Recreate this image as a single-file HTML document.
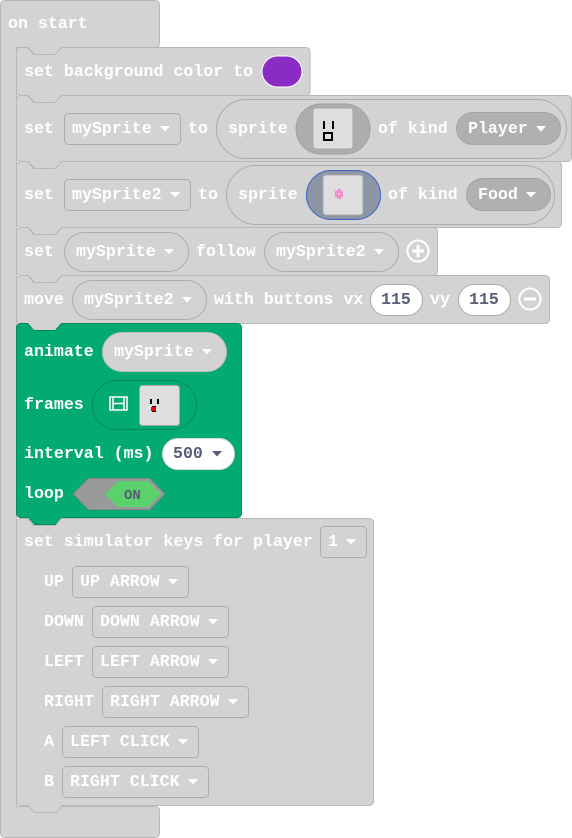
<!DOCTYPE html>
<html><head><meta charset="utf-8"><style>
html,body{margin:0;padding:0;background:#fff;width:572px;height:838px;overflow:hidden}
svg{display:block}
text{font-family:"Liberation Mono",monospace;font-weight:bold;font-size:16.6px;fill:#fff}
.n{fill:#575e75}
</style></head><body>
<svg width="572" height="838" viewBox="0 0 572 838">
<defs>
<path id="arr" d="M0,0 h10 l-5,5.5 z" />
</defs>
<!-- hat -->
<path d="M0.5,4.5 a4 4 0 0 1 4,-4 H155.5 a4 4 0 0 1 4,4 V43.5 a4 4 0 0 1 -4,4 H62.5 l-6,7 h-22 l-6,-7 H16.5 V806.5 H155.5 a4 4 0 0 1 4,4 V833.5 a4 4 0 0 1 -4,4 H4.5 a4 4 0 0 1 -4,-4 Z" fill="#d3d3d3" stroke="#b8b8b8"/>
<text x="8" y="28">on start</text>

<g fill="#d3d3d3" stroke="#b8b8b8">
<path d="M16.5,51.5 a4 4 0 0 1 4,-4 H27.5 l6,7 h22 l6,-7 H306 a4 4 0 0 1 4,4 V91.5 a4 4 0 0 1 -4,4 H62.5 l-6,7 h-22 l-6,-7 H20.5 a4 4 0 0 1 -4,-4 Z"/>
<path d="M16.5,99.5 a4 4 0 0 1 4,-4 H27.5 l6,7 h22 l6,-7 H567.5 a4 4 0 0 1 4,4 V157.5 a4 4 0 0 1 -4,4 H62.5 l-6,7 h-22 l-6,-7 H20.5 a4 4 0 0 1 -4,-4 Z"/>
<path d="M16.5,165.5 a4 4 0 0 1 4,-4 H27.5 l6,7 h22 l6,-7 H557.5 a4 4 0 0 1 4,4 V223.5 a4 4 0 0 1 -4,4 H62.5 l-6,7 h-22 l-6,-7 H20.5 a4 4 0 0 1 -4,-4 Z"/>
<path d="M16.5,231.5 a4 4 0 0 1 4,-4 H27.5 l6,7 h22 l6,-7 H433.5 a4 4 0 0 1 4,4 V271.5 a4 4 0 0 1 -4,4 H62.5 l-6,7 h-22 l-6,-7 H20.5 a4 4 0 0 1 -4,-4 Z"/>
<path d="M16.5,279.5 a4 4 0 0 1 4,-4 H27.5 l6,7 h22 l6,-7 H545.5 a4 4 0 0 1 4,4 V319.5 a4 4 0 0 1 -4,4 H62.5 l-6,7 h-22 l-6,-7 H20.5 a4 4 0 0 1 -4,-4 Z"/>
</g>
<path d="M16.5,327.5 a4 4 0 0 1 4,-4 H27.5 l6,7 h22 l6,-7 H237.5 a4 4 0 0 1 4,4 V513.5 a4 4 0 0 1 -4,4 H62.5 l-6,7 h-22 l-6,-7 H20.5 a4 4 0 0 1 -4,-4 Z" fill="#03aa74" stroke="#028a5d"/>
<path d="M16.5,522.5 a4 4 0 0 1 4,-4 H27.5 l6,7 h22 l6,-7 H369.5 a4 4 0 0 1 4,4 V801.5 a4 4 0 0 1 -4,4 H62.5 l-6,7 h-22 l-6,-7 H20.5 a4 4 0 0 1 -4,-4 Z" fill="#d3d3d3" stroke="#b8b8b8"/>

<text x="24" y="76">set background color to</text>
<rect x="262" y="56" width="40" height="31" rx="15.5" fill="#8b2bc6" stroke="#fff" stroke-width="1"/>

<text x="24" y="133">set</text>
<rect x="64.5" y="113.5" width="116" height="31" rx="4" fill="#d3d3d3" stroke="#adadad"/>
<text x="72" y="133">mySprite</text>
<use href="#arr" x="160" y="126" fill="#fff"/>
<text x="188" y="133">to</text>
<rect x="216.5" y="99.5" width="350" height="59" rx="29.5" fill="#d3d3d3" stroke="#adadad"/>
<text x="228" y="133">sprite</text>
<rect x="296" y="104" width="74" height="50" rx="25" fill="#adadad" stroke="#a2a2a2"/>
<rect x="313" y="108" width="40" height="41" rx="3" fill="#dedede" stroke="#a8a8a8"/>
<g fill="#000"><rect x="323" y="121" width="2" height="8"/><rect x="332" y="121" width="2" height="8"/>
<path d="M323,132 h10 v9 h-10z M325,134 v5 h6 v-5z" fill-rule="evenodd"/></g>
<text x="378" y="133">of kind</text>
<rect x="456.5" y="112.5" width="104" height="32" rx="16" fill="#b0b0b0" stroke="#a4a4a4"/>
<text x="468" y="133">Player</text>
<use href="#arr" x="536" y="126" fill="#fff"/>

<text x="24" y="199">set</text>
<rect x="64.5" y="179.5" width="126" height="31" rx="4" fill="#d3d3d3" stroke="#adadad"/>
<text x="72" y="199">mySprite2</text>
<use href="#arr" x="170" y="192" fill="#fff"/>
<text x="198" y="199">to</text>
<rect x="226.5" y="165.5" width="328" height="59" rx="29.5" fill="#d3d3d3" stroke="#adadad"/>
<text x="238" y="199">sprite</text>
<rect x="306.5" y="170.5" width="74" height="49" rx="24.5" fill="#8d96a4" stroke="#3d62c9"/>
<rect x="323" y="175" width="40" height="40" rx="3" fill="#dedede" stroke="#a8a8a8"/>
<path d="M337,189 h4 v2 h2 v6 h-2 v2 h-4 v-2 h-2 v-6 h2z" fill="#f28fcb"/>
<rect x="338" y="193" width="2" height="2" fill="#f9c4e4"/>
<text x="388" y="199">of kind</text>
<rect x="466.5" y="178.5" width="84" height="32" rx="16" fill="#b0b0b0" stroke="#a4a4a4"/>
<text x="478" y="199">Food</text>
<use href="#arr" x="526" y="192" fill="#fff"/>

<text x="24" y="256">set</text>
<rect x="64.5" y="232.5" width="124" height="39" rx="19.5" fill="#d3d3d3" stroke="#adadad"/>
<text x="76" y="256">mySprite</text>
<use href="#arr" x="164" y="249" fill="#fff"/>
<text x="196" y="256">follow</text>
<rect x="264.5" y="232.5" width="134" height="39" rx="19.5" fill="#d3d3d3" stroke="#adadad"/>
<text x="276" y="256">mySprite2</text>
<use href="#arr" x="374" y="249" fill="#fff"/>
<circle cx="418" cy="251" r="10.5" fill="none" stroke="#fff" stroke-width="2"/>
<path d="M412,251 h12 M418,245 v12" stroke="#fff" stroke-width="3"/>

<text x="24" y="304">move</text>
<rect x="72.5" y="280.5" width="134" height="39" rx="19.5" fill="#d3d3d3" stroke="#adadad"/>
<text x="84" y="304">mySprite2</text>
<use href="#arr" x="182" y="297" fill="#fff"/>
<text x="214" y="304">with buttons vx</text>
<rect x="370.5" y="284.5" width="52" height="31" rx="15.5" fill="#fff" stroke="#adadad"/>
<text x="381" y="304" class="n">115</text>
<text x="430" y="304">vy</text>
<rect x="458.5" y="284.5" width="52" height="31" rx="15.5" fill="#fff" stroke="#adadad"/>
<text x="469" y="304" class="n">115</text>
<circle cx="530" cy="299" r="10.5" fill="none" stroke="#fff" stroke-width="2"/>
<path d="M524,299 h12" stroke="#fff" stroke-width="3"/>

<text x="24" y="356">animate</text>
<rect x="102.5" y="332.5" width="124" height="39" rx="19.5" fill="#d3d3d3" stroke="#c0c0c0"/>
<text x="114" y="356">mySprite</text>
<use href="#arr" x="202" y="349" fill="#fff"/>
<text x="24" y="409">frames</text>
<rect x="92.5" y="380.5" width="104" height="49" rx="24.5" fill="#03aa74" stroke="#028a5d"/>
<g fill="none" stroke="#fff" stroke-width="1.5">
<rect x="110" y="397" width="17" height="13"/>
<path d="M113,397 v13 M124,397 v13 M113,403.5 h11"/>
</g>
<rect x="139.5" y="385.5" width="40" height="40" rx="3" fill="#dedede" stroke="#a8a8a8"/>
<g fill="#000"><rect x="150" y="399" width="2" height="5"/><rect x="157" y="399" width="2" height="5"/><rect x="152" y="406" width="4" height="6"/></g>
<rect x="151" y="407" width="5" height="4" fill="#e00"/>
<text x="24" y="458">interval (ms)</text>
<rect x="162.5" y="438.5" width="72" height="31" rx="15.5" fill="#fff" stroke="#ddd"/>
<text x="173" y="458" class="n">500</text>
<use href="#arr" x="212" y="451" fill="#575e75"/>
<text x="24" y="498">loop</text>
<path d="M73.5,494 L88.5,478.5 H149.5 L164.5,494 L149.5,509.5 H88.5 Z" fill="#9a9a9a" stroke="#888"/>
<path d="M105,494 L118,481 H148 L161,494 L148,507 H118 Z" fill="#5ad16a"/>
<text x="124" y="499" class="n" style="font-size:14px">ON</text>

<text x="24" y="546">set simulator keys for player</text>
<rect x="320.5" y="526.5" width="46" height="31" rx="4" fill="#d3d3d3" stroke="#adadad"/>
<text x="328" y="546">1</text>
<use href="#arr" x="346" y="539" fill="#fff"/>

<text x="44" y="586">UP</text>
<rect x="72.5" y="566.5" width="116" height="31" rx="4" fill="#d3d3d3" stroke="#adadad"/>
<text x="80" y="586">UP ARROW</text>
<use href="#arr" x="168" y="579" fill="#fff"/>

<text x="44" y="626">DOWN</text>
<rect x="92.5" y="606.5" width="136" height="31" rx="4" fill="#d3d3d3" stroke="#adadad"/>
<text x="100" y="626">DOWN ARROW</text>
<use href="#arr" x="208" y="619" fill="#fff"/>

<text x="44" y="666">LEFT</text>
<rect x="92.5" y="646.5" width="136" height="31" rx="4" fill="#d3d3d3" stroke="#adadad"/>
<text x="100" y="666">LEFT ARROW</text>
<use href="#arr" x="208" y="659" fill="#fff"/>

<text x="44" y="706">RIGHT</text>
<rect x="102.5" y="686.5" width="146" height="31" rx="4" fill="#d3d3d3" stroke="#adadad"/>
<text x="110" y="706">RIGHT ARROW</text>
<use href="#arr" x="228" y="699" fill="#fff"/>

<text x="44" y="746">A</text>
<rect x="62.5" y="726.5" width="136" height="31" rx="4" fill="#d3d3d3" stroke="#adadad"/>
<text x="70" y="746">LEFT CLICK</text>
<use href="#arr" x="178" y="739" fill="#fff"/>

<text x="44" y="786">B</text>
<rect x="62.5" y="766.5" width="146" height="31" rx="4" fill="#d3d3d3" stroke="#adadad"/>
<text x="70" y="786">RIGHT CLICK</text>
<use href="#arr" x="188" y="779" fill="#fff"/>
</svg>
</body></html>
